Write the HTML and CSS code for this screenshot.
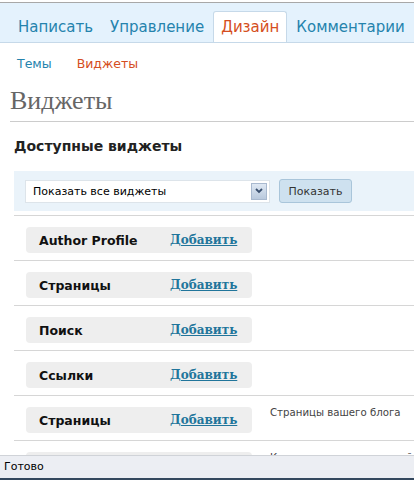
FILE: index.html
```html
<!DOCTYPE html>
<html lang="ru">

<head>
    <meta charset="UTF-8">
    <meta name="viewport" content="width=device-width, initial-scale=1.0">
    <title>Виджеты</title>
    <link rel="stylesheet" href="styles.css">
</head>

<body>
    <div class="page">
        <div class="topline"></div>
        <ul class="tabs">
            <li><a href="#">Написать</a></li>
            <li><a href="#">Управление</a></li>
            <li class="current"><a href="#">Дизайн</a></li>
            <li><a href="#">Комментарии</a></li>
        </ul>

        <ul class="subnav">
            <li><a href="#">Темы</a></li>
            <li class="current"><a href="#">Виджеты</a></li>
        </ul>

        <div class="wrap">
            <h2>Виджеты</h2>

            <h3>Доступные виджеты</h3>

            <div class="filter">
                <div class="select">
                    <span>Показать все виджеты</span>
                    <i class="arrow">
                        <svg width="8" height="6" viewBox="0 0 8 6">
                            <path d="M1 1 L4 4 L7 1" fill="none" stroke="#3a4f6e" stroke-width="1.8"/>
                        </svg>
                    </i>
                </div>
                <button class="btn" type="button">Показать</button>
            </div>

            <ul class="widgets">
                <li>
                    <div class="box"><b>Author Profile</b><a href="#">Добавить</a></div>
                </li>
                <li>
                    <div class="box"><b>Страницы</b><a href="#">Добавить</a></div>
                </li>
                <li>
                    <div class="box"><b>Поиск</b><a href="#">Добавить</a></div>
                </li>
                <li>
                    <div class="box"><b>Ссылки</b><a href="#">Добавить</a></div>
                </li>
                <li>
                    <div class="box"><b>Страницы</b><a href="#">Добавить</a></div>
                    <p class="desc">Страницы вашего блога</p>
                </li>
                <li>
                    <div class="box"><b>Календарь</b><a href="#">Добавить</a></div>
                    <p class="desc">Календарь ваших записей</p>
                </li>
            </ul>
        </div>
    </div>

    <!-- строка состояния браузера -->
    <div class="status">Готово</div>
</body>

</html>
```

FILE: styles.css
```css
* {
    margin: 0;
    padding: 0;
    box-sizing: border-box;
}

body {
    font-family: "DejaVu Sans", Verdana, sans-serif;
    font-size: 11px;
    color: #333;
    background: #fff;
    overflow: hidden;
}

ul {
    list-style: none;
}

a {
    text-decoration: none;
}

.page {
    height: 455px;
    overflow: hidden;
}

.topline {
    height: 3px;
    border-bottom: 1px solid #a8a8a8;
    background: #fff;
}

.tabs {
    display: flex;
    gap: 1px;
    height: 40px;
    padding: 8px 0 0 10px;
    background: #e4f2fd;
    border-bottom: 1px solid #c6d9e9;
}

.tabs li a {
    display: block;
    height: 31px;
    padding: 0 7px;
    font-size: 15px;
    line-height: 31px;
    color: #2583ad;
    border: 1px solid transparent;
    border-bottom: none;
}

.tabs li.current a {
    color: #d54e21;
    background: #fff;
    border-color: #c6d9e9;
    border-radius: 3px 3px 0 0;
}

.subnav {
    display: flex;
    gap: 25px;
    padding: 13px 0 0 17px;
    height: 39px;
}

.subnav a {
    font-size: 12.5px;
    color: #2583ad;
}

.subnav li.current a {
    color: #d54e21;
}

.wrap {
    padding-left: 10px;
}

h2 {
    height: 40px;
    padding-top: 4px;
    font-family: "Liberation Serif", Georgia, serif;
    font-weight: normal;
    font-size: 26px;
    color: #666;
    border-bottom: 1px solid #ccc;
}

h3 {
    padding: 16px 0 0 4px;
    height: 49px;
    font-size: 14px;
    font-weight: bold;
    color: #222;
}

.filter {
    display: flex;
    align-items: center;
    gap: 9px;
    height: 40px;
    margin-left: 4px;
    padding-left: 11px;
    background: #eaf3fa;
}

.select {
    display: flex;
    align-items: center;
    justify-content: space-between;
    width: 245px;
    height: 23px;
    padding: 0 2px 0 7px;
    background: #fff;
    border: 1px solid #dde4ea;
    color: #000;
}

.select .arrow {
    display: flex;
    align-items: center;
    justify-content: center;
    width: 16px;
    height: 17px;
    background: linear-gradient(#dfe8f3, #b9c9dd);
    border: 1px solid #a9b9cf;
}

.btn {
    width: 73px;
    height: 24px;
    font-family: inherit;
    font-size: 11px;
    color: #333;
    background: #cee1ef;
    border: 1px solid #a9c5da;
    border-radius: 3px;
}

.widgets {
    margin: 4px 0 0 4px;
}

.widgets li {
    display: flex;
    gap: 18px;
    height: 45px;
    padding: 11px 0 0 12px;
    border-top: 1px solid #d6d6d6;
}

.widgets .box {
    display: flex;
    flex-shrink: 0;
    align-items: center;
    width: 226px;
    height: 26px;
    padding-left: 13px;
    background: #eee;
    border-radius: 4px;
}

.widgets .box b {
    width: 131px;
    font-size: 12.5px;
    color: #111;
}

.widgets .box a {
    font-family: "DejaVu Serif", Georgia, serif;
    font-weight: bold;
    font-size: 12px;
    color: #21759b;
    text-decoration: underline;
}

.widgets .desc {
    font-size: 10.2px;
    color: #444;
    white-space: nowrap;
}

.status {
    height: 25px;
    padding: 4px 0 0 4px;
    font-size: 11px;
    color: #000;
    background: #eceef3;
    border-top: 1px solid #d0d3d8;
    border-bottom: 2px solid #34485e;
}
```
